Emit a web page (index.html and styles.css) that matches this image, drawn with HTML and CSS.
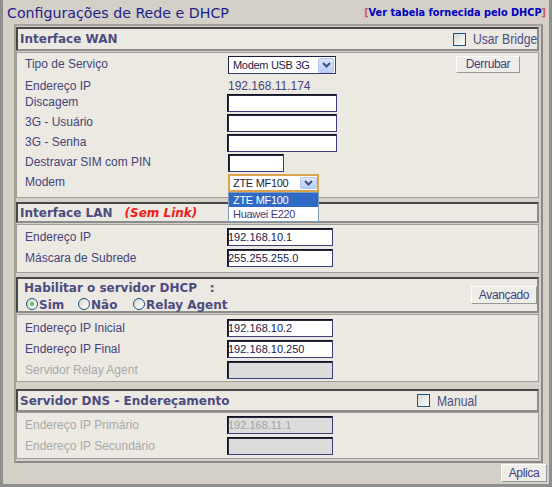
FILE: index.html
```html
<!DOCTYPE html>
<html lang="pt-BR">
<head>
<meta charset="utf-8">
<title>Configurações de Rede e DHCP</title>
<link rel="stylesheet" href="styles.css">
</head>
<body>
<div class="window">
  <header class="top">
    <h1 class="title">Configurações de Rede e DHCP</h1>
    <a class="dhcp-link" href="#"><span class="br">[</span>Ver tabela fornecida pelo DHCP<span class="br">]</span></a>
  </header>

  <main class="panel">
    <!-- WAN -->
    <div class="sec-head head-wan">
      <span class="head-title">Interface WAN</span>
      <span class="check-group bridge"><span class="checkbox"></span><span class="check-label label-bridge"><span class="narrow">Usar Bridge</span></span></span>
    </div>
    <div class="sec-body body-wan">
      <div class="row row-service">
        <span class="label">Tipo de Serviço</span>
        <div class="value-flex">
          <div class="select select-service"><span class="select-text">Modem USB 3G</span><span class="arrow"><svg width="9" height="6" viewBox="0 0 9 6"><path d="M1 1 L4.5 4.5 L8 1" fill="none" stroke="#3f527e" stroke-width="2"/></svg></span></div>
          <button class="btn btn-derrubar" type="button">Derrubar</button>
        </div>
      </div>
      <div class="row row-ip">
        <span class="label">Endereço IP</span>
        <span class="plain-value">192.168.11.174</span>
      </div>
      <div class="row">
        <label class="label" for="discagem">Discagem</label>
        <input id="discagem" class="field" type="text" value="">
      </div>
      <div class="row">
        <label class="label" for="usuario">3G - Usuário</label>
        <input id="usuario" class="field" type="text" value="">
      </div>
      <div class="row">
        <label class="label" for="senha">3G - Senha</label>
        <input id="senha" class="field" type="text" value="">
      </div>
      <div class="row">
        <label class="label" for="pin">Destravar SIM com PIN</label>
        <input id="pin" class="field field-pin" type="text" value="">
      </div>
      <div class="row">
        <span class="label">Modem</span>
        <div>
          <div class="select select-modem"><span class="select-text">ZTE MF100</span><span class="arrow arrow-small"><svg width="9" height="6" viewBox="0 0 9 6"><path d="M1 1 L4.5 4.5 L8 1" fill="none" stroke="#3f527e" stroke-width="2"/></svg></span>
            <div class="dropdown">
              <div class="opt sel">ZTE MF100</div>
              <div class="opt">Huawei E220</div>
            </div>
          </div>
        </div>
      </div>
    </div>

    <!-- LAN -->
    <div class="sec-head head-lan">
      <span class="head-title">Interface LAN</span><span class="nolink">(Sem Link)</span>
    </div>
    <div class="sec-body body-lan">
      <div class="row">
        <label class="label" for="ip-lan">Endereço IP</label>
        <input id="ip-lan" class="field" type="text" value="192.168.10.1">
      </div>
      <div class="row">
        <label class="label" for="mask">Máscara de Subrede</label>
        <input id="mask" class="field" type="text" value="255.255.255.0">
      </div>
    </div>

    <!-- DHCP -->
    <div class="sec-head head-dhcp">
      <div class="dhcp-lines">
        <span class="dhcp-line1">Habilitar o servidor DHCP&nbsp;&nbsp; :</span>
        <div class="radios">
          <span class="radio-item item-sim"><span class="radio on"></span><span class="radio-text">Sim</span></span>
          <span class="radio-item item-nao"><span class="radio"></span><span class="radio-text">Não</span></span>
          <span class="radio-item"><span class="radio"></span><span class="radio-text">Relay Agent</span></span>
        </div>
      </div>
      <button class="btn btn-avancado" type="button">Avançado</button>
    </div>
    <div class="sec-body body-dhcp">
      <div class="row">
        <label class="label" for="ip-ini">Endereço IP Inicial</label>
        <input id="ip-ini" class="field" type="text" value="192.168.10.2">
      </div>
      <div class="row">
        <label class="label" for="ip-fim">Endereço IP Final</label>
        <input id="ip-fim" class="field" type="text" value="192.168.10.250">
      </div>
      <div class="row">
        <label class="label muted" for="relay">Servidor Relay Agent</label>
        <input id="relay" class="field" type="text" value="" disabled>
      </div>
    </div>

    <!-- DNS -->
    <div class="sec-head head-dns">
      <span class="head-title">Servidor DNS - Endereçamento</span>
      <span class="check-group manual"><span class="checkbox"></span><span class="check-label label-manual"><span class="narrow">Manual</span></span></span>
    </div>
    <div class="sec-body body-dns">
      <div class="row">
        <label class="label muted" for="dns1">Endereço IP Primário</label>
        <input id="dns1" class="field" type="text" value="192.168.11.1" disabled>
      </div>
      <div class="row">
        <label class="label muted" for="dns2">Endereço IP Secundário</label>
        <input id="dns2" class="field" type="text" value="" disabled>
      </div>
    </div>
  </main>

  <footer class="footer">
    <button class="btn btn-aplica" type="button">Aplica</button>
  </footer>
</div>
</body>
</html>
```

FILE: styles.css
```css
* { box-sizing: border-box; }

html, body {
  margin: 0;
  padding: 0;
}

body {
  width: 552px;
  height: 487px;
  overflow: hidden;
  background: #d4d0c8;
  font-family: "Liberation Sans", Arial, sans-serif;
  font-size: 12px;
  color: #44447a;
}

.window {
  width: 552px;
  height: 487px;
  background: #d4d0c8;
  border: 3px solid #8e8e8e;
  border-top: 0;
  display: flex;
  flex-direction: column;
}

/* title bar */
.top {
  flex: none;
  height: 24px;
  display: flex;
  justify-content: space-between;
  align-items: flex-start;
  padding: 5px 3px 0 4px;
}

.title {
  margin: 0;
  font: 400 14.2px/17px "DejaVu Sans", Verdana, sans-serif;
  color: #1e1e8a;
  white-space: nowrap;
}

.dhcp-link {
  margin-top: 2px;
  font: 700 9.75px/12px "DejaVu Sans", Verdana, sans-serif;
  color: #0000c2;
  text-decoration: none;
  white-space: nowrap;
}

.dhcp-link .br { color: #c85a5a; }

/* panel */
.panel {
  flex: none;
  width: 529px;
  height: 439px;
  margin-left: 11px;
  border: 2px solid;
  border-color: #a4a09a #8a8a8a #8a8a8a #a4a09a;
  padding: 1px 2px 2px 0;
  display: flex;
  flex-direction: column;
}

.sec-head {
  flex: none;
  display: flex;
  align-items: center;
  border: 2px solid;
  border-color: #474747 #8c8c8c #8c8c8c #474747;
  background: #ece9e2;
  padding: 0 0 0 2px;
  font: 700 12px/16px "DejaVu Sans", Verdana, sans-serif;
  color: #4c4c80;
  white-space: nowrap;
}

.sec-body {
  flex: none;
  background: #ece9e2;
  border: 1px solid #a09e9a;
  padding-left: 8px;
}

.head-wan { height: 24px; }
.body-wan { margin-top: 1px; height: 146px; padding-top: 2px; }
.head-lan { margin-top: 4px; height: 21px; }
.body-lan { margin-top: 1px; height: 49px; padding-top: 1px; }
.head-dhcp { margin-top: 4px; height: 36px; padding-left: 6px; }
.body-dhcp { margin-top: 1px; height: 68px; padding-top: 2px; }
.head-dns { margin-top: 7px; height: 23px; }
.body-dns { height: 47px; padding-top: 1px; }

.nolink {
  margin-left: 12px;
  color: #ee1c1c;
  font-style: italic;
}

/* rows */
.row {
  display: grid;
  grid-template-columns: 202px 1fr;
  height: 21px;
  align-items: center;
}

.label {
  line-height: 15px;
  padding-top: 2px;
  white-space: nowrap;
}

.label.muted { color: #a9a9a9; }

.body-wan .row { height: 20px; align-items: start; }
.body-wan .row-service { height: 22px; }
.body-wan .row-ip { height: 16px; }
.body-wan .label,
.plain-value { line-height: 17px; padding-top: 1px; }
.plain-value { margin-left: 1px; color: #44447a; }

/* inputs */
.field {
  display: block;
  width: 106px;
  height: 18px;
  margin: 0;
  padding: 0;
  border: 1px solid;
  border-color: #111128 #3d3d7e #3d3d7e #111128;
  box-shadow: inset 1px 1px 0 #2a2a3a;
  background: #fff;
  font: 11px "Liberation Sans", Arial, sans-serif;
  color: #20204a;
  outline: none;
}

.field:disabled {
  background: #dcdcdc;
  color: #a4a4a4;
}

.body-wan .field { margin-top: 1px; width: 110px; }
.body-wan .field-pin { width: 56px; margin-left: 1px; }

/* selects */
.value-flex {
  display: flex;
  align-items: flex-start;
}

.select {
  position: relative;
  display: flex;
  align-items: center;
  height: 18px;
  margin: 1px 0 0 1px;
  border: 1px solid;
  border-color: #1c1c3c #3a3a78 #3a3a78 #1c1c3c;
  background: #fff;
  padding: 0 1px 0 4px;
  font: 11px "Liberation Sans", Arial, sans-serif;
  letter-spacing: -0.3px;
  color: #1c1c40;
  white-space: nowrap;
}

.select-text { flex: 1; }

.select-service { width: 108px; }

.select-modem {
  width: 91px;
  border: 2px solid #dba44c;
  padding: 0 0 0 3px;
}

.arrow {
  flex: none;
  width: 16px;
  height: 15px;
  display: flex;
  align-items: center;
  justify-content: center;
  border: 1px solid #b3c6ee;
  border-radius: 2px;
  background: linear-gradient(#dbe6fd, #b9cdf6);
}

.arrow-small { width: 17px; height: 12px; }

.dropdown {
  position: absolute;
  left: -2px;
  top: calc(100% + 2px);
  width: 91px;
  border: 1px solid #7f9db9;
  background: #fff;
  z-index: 5;
}

.opt {
  height: 14px;
  line-height: 14px;
  padding-left: 4px;
  color: #3c3c78;
  letter-spacing: -0.3px;
}

.opt.sel {
  background: #316ac5;
  color: #fff;
}

/* buttons */
.btn {
  height: 17px;
  padding: 0;
  margin: 0;
  font: 12px/15px "Liberation Sans", Arial, sans-serif;
  letter-spacing: -0.35px;
  color: #40407c;
  background: #efede8;
  border: 1px solid;
  border-color: #fdfdfd #989898 #989898 #fdfdfd;
}

.btn-derrubar { width: 64px; margin: 1px 18px 0 auto; }
.btn-avancado { width: 66px; height: 18px; margin-left: auto; }
.btn-aplica { width: 46px; height: 18px; }

/* checkboxes */
.check-group {
  display: flex;
  align-items: center;
  margin-left: auto;
}

.checkbox {
  width: 13px;
  height: 13px;
  border: 1px solid #1c5180;
  background: linear-gradient(135deg, #d8d8d0, #ffffff);
}

.check-label {
  display: block;
  margin-left: 7px;
  height: 16px;
  font: 400 15px/16px "Liberation Sans", Arial, sans-serif;
  color: #4e4e86;
  white-space: nowrap;
}

.check-label .narrow {
  display: inline-block;
  transform: scaleX(0.81);
  transform-origin: 0 50%;
}

.label-bridge { width: 64px; }
.label-manual { width: 40px; }

.manual { margin-right: 60px; }

/* DHCP radios */
.dhcp-lines {
  display: flex;
  flex-direction: column;
  margin-top: 2px;
}

.dhcp-line1 { line-height: 16px; }

.radios {
  display: flex;
  align-items: center;
  height: 16px;
  margin: 1px 0 0 2px;
}

.radio-item {
  display: flex;
  align-items: center;
}

.item-sim { width: 52px; }
.item-nao { width: 55px; }
.radio-text { margin-left: 1px; }

.radio {
  position: relative;
  width: 12px;
  height: 12px;
  border-radius: 50%;
  border: 1px solid #1c5180;
  background: linear-gradient(135deg, #d8d8d0, #ffffff);
  margin-top: -1px;
}

.radio.on::after {
  content: "";
  position: absolute;
  left: 3px;
  top: 3px;
  width: 4px;
  height: 4px;
  border-radius: 50%;
  background: radial-gradient(circle, #7ee07e, #21a121);
}

/* footer */
.footer {
  flex: none;
  height: 21px;
  display: flex;
  justify-content: flex-end;
  align-items: flex-start;
  padding: 1px 2px 0 0;
}
```
